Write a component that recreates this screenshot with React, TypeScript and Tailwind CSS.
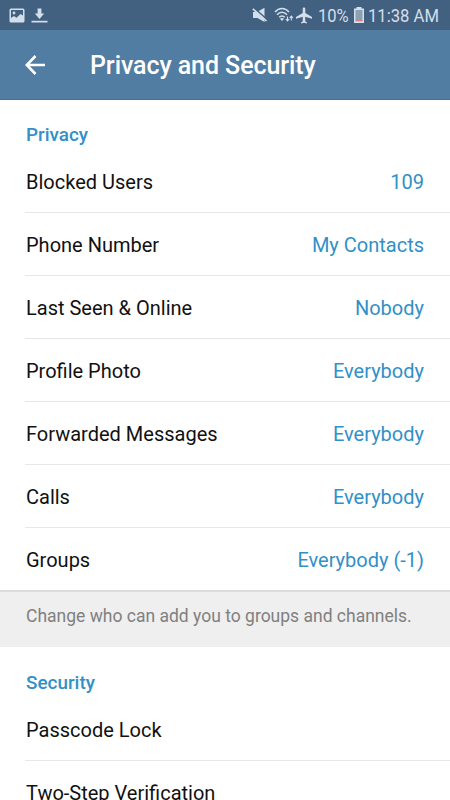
type Item = { label: string; value?: string };

const privacyItems: Item[] = [
  { label: 'Blocked Users', value: '109' },
  { label: 'Phone Number', value: 'My Contacts' },
  { label: 'Last Seen & Online', value: 'Nobody' },
  { label: 'Profile Photo', value: 'Everybody' },
  { label: 'Forwarded Messages', value: 'Everybody' },
  { label: 'Calls', value: 'Everybody' },
  { label: 'Groups', value: 'Everybody (-1)' },
];

const securityItems: Item[] = [
  { label: 'Passcode Lock' },
  { label: 'Two-Step Verification' },
];

function StatusBar() {
  return (
    <div className="flex h-[30px] items-center bg-[#426180] pl-[9px] pr-[11px] text-[#d3dfeb]">
      <svg width="16" height="15" viewBox="0 0 16 15" fill="none" stroke="currentColor" strokeWidth="1.5">
        <rect x="1.25" y="1.25" width="13.5" height="12.5" rx="0.8" />
        <circle cx="5" cy="5" r="1.4" fill="currentColor" stroke="none" />
        <path d="M2 13V10l3-2 2.5 1.7L11.5 6 14 7.5V13z" fill="currentColor" stroke="none" />
      </svg>
      <svg className="ml-[6px]" width="17" height="15" viewBox="0 0 17 15" fill="currentColor">
        <path d="M6.6 .5h3.8v5h2.8L8.5 11 3.8 5.5h2.8z" />
        <path d="M.5 12.8h16v1.7H.5z" />
      </svg>
      <div className="ml-auto flex items-center">
        <svg width="16" height="16" viewBox="0 0 16 16" fill="currentColor">
          <path d="M1 5h4L12.5 .8V15L5.500 11H1z" />
          <path d="M1.8 .8L15.5 13" stroke="#426180" strokeWidth="1.6" />
          <path d="M.8 1.8L14.5 14" stroke="currentColor" strokeWidth="1.6" />
        </svg>
        <svg className="ml-[6px]" width="20" height="18" viewBox="0 0 20 18" fill="none" stroke="currentColor" strokeWidth="1.6">
          <path d="M1 6C5 1.3 11 1.3 15 6" />
          <path d="M3 8.7C6 5.5 10 5.5 13 8.7" />
          <path d="M5.2 11.2c1.7-1.7 3.9-1.7 5.6 0" />
          <path d="M6 12.8c1.2-1.1 2.8-1.1 4 0L8 15z" fill="currentColor" stroke="none" />
          <path d="M13.5 10.5V15M11.800 13l1.700 2 1.700-2M17.300 14.500V10M15.600 12l1.700-2 1.700 2" strokeWidth="1.1" />
        </svg>
        <svg className="ml-[2px]" width="16" height="17" viewBox="2 1.5 19 21" preserveAspectRatio="none" fill="currentColor">
          <path d="M21 16v-2l-8-5V3.500c0-.83-.67-1.500-1.500-1.500S10 2.670 10 3.500V9l-8 5v2l8-2.500V19l-2 1.500V22l3.500-1 3.500 1v-1.500L13 19v-5.500l8 2.500z" />
        </svg>
        <span className="ml-[6px] w-[34px] origin-left scale-x-[0.92] pt-[2px] text-[18px] leading-[30px] whitespace-nowrap">10%</span>
        <svg className="ml-px" width="12" height="16" viewBox="0 0 12 16">
          <path d="M3.5 0h5v1.500H11V16H1V1.500h2.500z" fill="#d3dfeb" />
          <path d="M2.5 3h7v10h-7z" fill="#8ba0b3" />
          <path d="M2.5 13h7v1.300h-7z" fill="#cf8288" />
        </svg>
        <span className="ml-[3px] w-[71px] origin-left scale-x-[0.925] pt-[2px] text-[18px] leading-[30px] whitespace-nowrap">11:38 AM</span>
      </div>
    </div>
  );
}

function Header() {
  return (
    <header className="flex h-[70px] items-center border-b border-[#486f95] bg-[#527da3] pl-[25px] text-white">
      <svg width="20" height="20" viewBox="0 0 20 20" fill="none" stroke="currentColor" strokeWidth="2.6">
        <path d="M20 10H2M10.500 1L1.700 10l8.800 9" />
      </svg>
      <h1 className="ml-[45px] pt-[3px] text-[25px] font-medium tracking-[-0.08px] whitespace-nowrap">Privacy and Security</h1>
    </header>
  );
}

function Row({ label, value, last }: Item & { last?: boolean }) {
  return (
    <div className="flex h-[63px] pl-[25px]">
      <div className={`flex flex-1 items-center justify-between pl-px pr-[26px] text-[20px] ${last ? '' : 'border-b border-[#e7e7e7] pt-[2px]'}`}>
        <span className="text-[#111]">{label}</span>
        <span className="text-[#3290c8]">{value}</span>
      </div>
    </div>
  );
}

function Section({ title, items }: { title: string; items: Item[] }) {
  return (
    <section>
      <h2 className="flex h-[50px] items-center pt-[21px] pl-[26px] text-[18.9px] font-medium text-[#3290c8]">{title}</h2>
      {items.map((item, i) => (
        <Row key={item.label} {...item} last={i === items.length - 1} />
      ))}
    </section>
  );
}

export default function App() {
  return (
    <div className="h-[800px] w-[450px] overflow-hidden bg-white font-[Roboto,sans-serif]">
      <StatusBar />
      <Header />
      <Section title="Privacy" items={privacyItems} />
      <p className="mb-px -mt-px flex h-[57px] items-center border-t-2 border-[#dcdcdc] bg-[#efefef] pb-[7px] pl-[26px] text-[17.5px] text-[#808080]">
        Change who can add you to groups and channels.
      </p>
      <Section title="Security" items={securityItems} />
    </div>
  );
}
